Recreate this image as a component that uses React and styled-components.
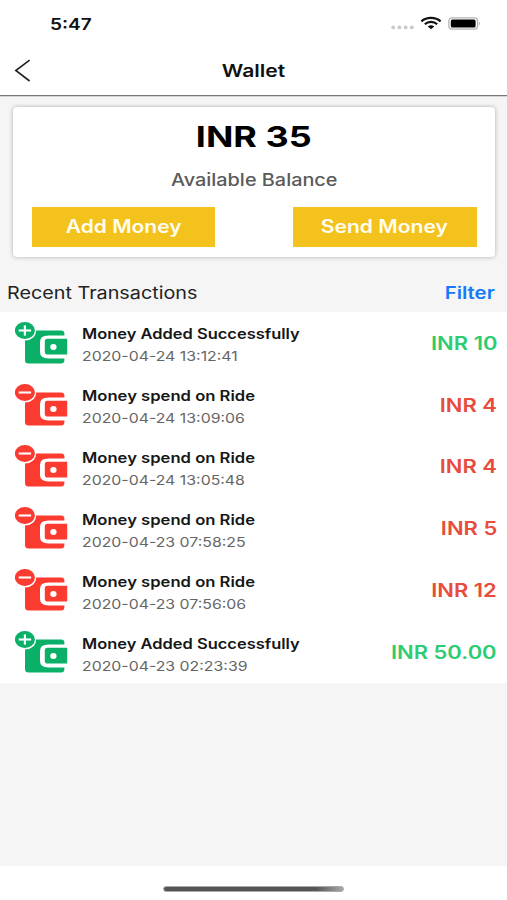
import React from 'react';
import styled, { createGlobalStyle } from 'styled-components';

const transactions = [
  { id: 1, type: 'added', date: '2020-04-24 13:12:41', amount: 'INR 10' },
  { id: 2, type: 'spent', date: '2020-04-24 13:09:06', amount: 'INR 4' },
  { id: 3, type: 'spent', date: '2020-04-24 13:05:48', amount: 'INR 4' },
  { id: 4, type: 'spent', date: '2020-04-23 07:58:25', amount: 'INR 5' },
  { id: 5, type: 'spent', date: '2020-04-23 07:56:06', amount: 'INR 12' },
  { id: 6, type: 'added', date: '2020-04-23 02:23:39', amount: 'INR 50.00' },
];

function StatusIcons() {
  return (
    <svg width="92" height="16" viewBox="0 0 92 16" fill="none">
      <g fill="#c8c8c8">
        <circle cx="4.2" cy="12.4" r="1.9" />
        <circle cx="10.4" cy="12.4" r="1.9" />
        <circle cx="16.6" cy="12.4" r="1.9" />
        <circle cx="22.8" cy="12.4" r="1.9" />
      </g>
      <g stroke="#111" strokeWidth="2.2">
        <path d="M32.4 6.3C37.6 1.8 46.4 1.8 51.6 6.3" />
        <path d="M35.8 9.2C39.2 6.2 44.8 6.2 48.2 9.2" />
      </g>
      <path d="M38.7 11.4Q42 9 45.3 11.4L42 14.2Z" fill="#111" />
      <rect x="59.8" y="2.8" width="28.8" height="11.4" rx="3.4" stroke="#b4b4b4" strokeWidth="1.3" />
      <rect x="61.8" y="4.5" width="24.8" height="8" rx="1.6" fill="#000" />
      <path d="M90 6.8Q91.8 8.6 90 10.4Z" fill="#999" />
    </svg>
  );
}

function WalletIcon({ type }) {
  const color = type === 'added' ? '#0aaf68' : '#fb3a30';
  return (
    <svg width="54" height="44" viewBox="0 0 54 44" fill="none">
      <path
        d="M13.5 8.5H46Q49.4 8.5 49.4 11.5V13.6H33.5Q25 13.6 25 20V30Q25 36.4 33.5 36.4H49.4V38Q49.4 41.6 46 41.6H13.5Q10 41.6 10 38V11.5Q10 8.5 13.5 8.5Z"
        fill={color}
      />
      <path d="M32.5 16.8H52.2V32.6H32.5Q29.8 32.6 29.8 29.8V19.6Q29.8 16.8 32.5 16.8Z" fill={color} />
      <ellipse cx="38.4" cy="25" rx="3.2" ry="2.9" fill="#fff" />
      <ellipse cx="9.9" cy="8.7" rx="11.2" ry="9.9" fill="#fff" />
      <ellipse cx="9.9" cy="8.5" rx="10" ry="8.5" fill={color} />
      <path d="M3.7 8.5H16.1" stroke="#fff" strokeWidth="2.1" />
      {type === 'added' && <path d="M9.9 3.4V13.6" stroke="#fff" strokeWidth="2.2" />}
    </svg>
  );
}

function Transaction({ item }) {
  const added = item.type === 'added';
  return (
    <StRow>
      <WalletIcon type={item.type} />
      <StRowInfo>
        <StRowTitle $stretch={added ? 1.176 : 1.187}>
          {added ? 'Money Added Successfully' : 'Money spend on Ride'}
        </StRowTitle>
        <StRowDate $stretch={1.175}>{item.date}</StRowDate>
      </StRowInfo>
      <StAmount $stretch={1.22} $origin="right" $type={item.type}>
        {item.amount}
      </StAmount>
    </StRow>
  );
}

function App() {
  return (
    <StScreen>
      <GlobalStyle />
      <StStatusBar>
        <StTime $stretch={1.19}>5:47</StTime>
        <StatusIcons />
      </StStatusBar>
      <StHeader>
        <StBackButton aria-label="Back">
          <svg width="18" height="24" viewBox="0 0 18 24" fill="none">
            <path d="M15.6 1.2L1.8 11.5L15.6 22" stroke="#222" strokeWidth="1.6" />
          </svg>
        </StBackButton>
        <StTitle $stretch={1.24} $origin="center">
          Wallet
        </StTitle>
      </StHeader>
      <StContent>
        <StCard>
          <StBalance $stretch={1.24} $origin="center">
            INR 35
          </StBalance>
          <StCaption $stretch={1.168} $origin="center">
            Available Balance
          </StCaption>
          <StButtons>
            <StMoneyButton>
              <StButtonText $stretch={1.165} $origin="center">
                Add Money
              </StButtonText>
            </StMoneyButton>
            <StMoneyButton>
              <StButtonText $stretch={1.17} $origin="center">
                Send Money
              </StButtonText>
            </StMoneyButton>
          </StButtons>
        </StCard>
        <StListHeader>
          <StListTitle $stretch={1.163}>Recent Transactions</StListTitle>
          <StFilter $stretch={1.2} $origin="right">
            Filter
          </StFilter>
        </StListHeader>
        <StList>
          {transactions.map((item) => (
            <Transaction key={item.id} item={item} />
          ))}
        </StList>
      </StContent>
      <StFooter>
        <StHomeBar />
      </StFooter>
    </StScreen>
  );
}

const GlobalStyle = createGlobalStyle`
  * {
    box-sizing: border-box;
  }
  body {
    margin: 0;
    background: #fff;
    font-family: Inter, "Liberation Sans", sans-serif;
  }
`;

const StScreen = styled.div`
  display: flex;
  flex-direction: column;
  width: 507px;
  height: 900px;
  overflow: hidden;
  background: #fff;
`;

// wide lettering used by every label
const StText = styled.span`
  display: block;
  white-space: nowrap;
  transform: scaleX(${({ $stretch }) => $stretch});
  transform-origin: ${({ $origin }) => $origin || 'left'} center;
`;

const StStatusBar = styled.div`
  display: flex;
  align-items: center;
  justify-content: space-between;
  height: 46px;
  padding: 0 26px 0 50px;
`;

const StTime = styled(StText)`
  font-size: 16px;
  font-weight: 600;
  line-height: 20px;
  color: #111;
  padding-top: 2px;
`;

const StHeader = styled.div`
  display: grid;
  grid-template-columns: 60px 1fr 60px;
  align-items: center;
  height: 50px;
  border-bottom: 1px solid #777;
`;

const StBackButton = styled.button`
  display: flex;
  padding: 0 0 0 14px;
  border: 0;
  background: none;
`;

const StTitle = styled(StText)`
  font-size: 17px;
  font-weight: 600;
  line-height: 22px;
  text-align: center;
  color: #111;
`;

const StContent = styled.div`
  height: 770px;
  padding-top: 10px;
  border-top: 1px solid #d4d4d4;
  background: #f5f5f5;
`;

const StCard = styled.div`
  display: flex;
  flex-direction: column;
  align-items: center;
  height: 150px;
  margin: 0 12px 0 13px;
  padding: 11.5px 18.5px 0;
  border-radius: 4px;
  background: #fff;
  box-shadow: 0 0 4px rgba(0, 0, 0, 0.3);
`;

const StBalance = styled(StText)`
  font-size: 29px;
  font-weight: 700;
  line-height: 36px;
  color: #000;
`;

const StCaption = styled(StText)`
  margin-top: 14px;
  font-size: 17px;
  font-weight: 500;
  line-height: 22px;
  color: #5a5a5a;
`;

const StButtons = styled.div`
  display: flex;
  justify-content: space-between;
  width: 100%;
  margin-top: 16.5px;
`;

const StMoneyButton = styled.button`
  display: flex;
  align-items: center;
  justify-content: center;
  width: 183.5px;
  height: 40px;
  padding: 0;
  border: 0;
  background: #f4c21d;
  font-family: inherit;
`;

const StButtonText = styled(StText)`
  font-size: 18px;
  font-weight: 600;
  line-height: 24px;
  color: #fffdf0;
`;

const StListHeader = styled.div`
  display: flex;
  align-items: center;
  justify-content: space-between;
  height: 55px;
  padding: 16px 12px 0 7px;
`;

const StListTitle = styled(StText)`
  font-size: 17px;
  line-height: 22px;
  color: #222;
`;

const StFilter = styled(StText)`
  font-size: 17px;
  font-weight: 600;
  line-height: 22px;
  color: #1479fb;
`;

const StList = styled.div`
  background: #fff;
`;

const StRow = styled.div`
  display: flex;
  align-items: center;
  height: 61.9px;
  padding: 1.5px 10px 0 15px;
`;

const StRowInfo = styled.div`
  flex: 1;
  padding: 3px 0 0 13px;
`;

const StRowTitle = styled(StText)`
  font-size: 14px;
  font-weight: 600;
  line-height: 22px;
  color: #161616;
`;

const StRowDate = styled(StText)`
  font-size: 13.5px;
  line-height: 22px;
  color: #666;
`;

const StAmount = styled(StText)`
  font-size: 18px;
  font-weight: 600;
  line-height: 24px;
  color: ${({ $type }) => ($type === 'added' ? '#2ecc71' : '#e74c3c')};
`;

const StFooter = styled.div`
  display: flex;
  justify-content: center;
  height: 34px;
  padding-top: 20px;
  background: #fff;
`;

const StHomeBar = styled.div`
  width: 181px;
  height: 6px;
  border: 1px solid #aaa;
  border-radius: 3px;
  background: linear-gradient(90deg, #555 0%, #555 85%, #aaa 100%);
`;

export default App;
